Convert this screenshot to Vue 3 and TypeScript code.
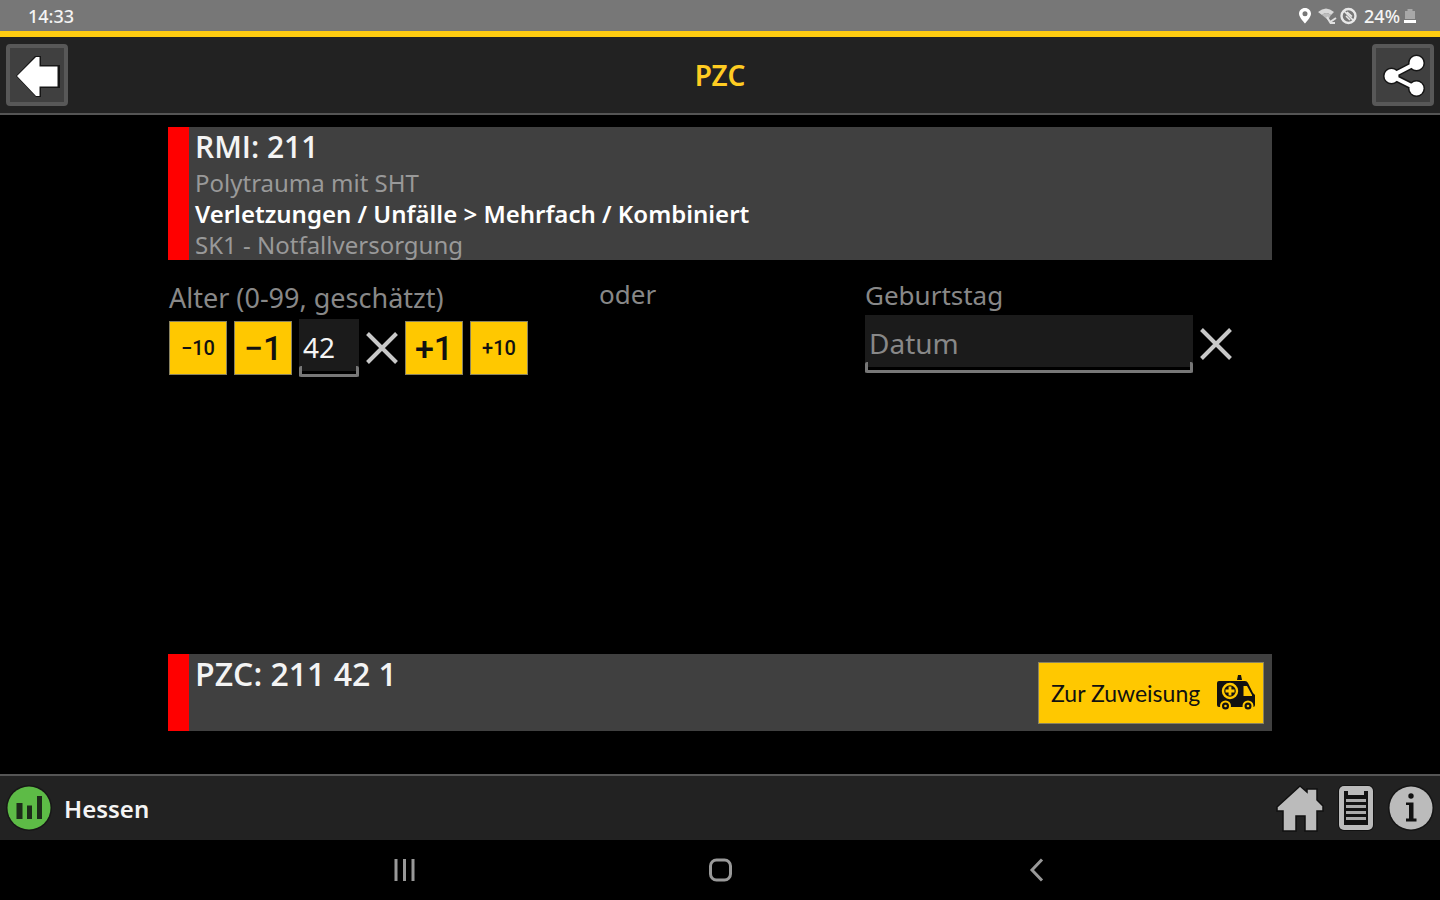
<script setup lang="ts">
import { computed, ref } from 'vue'

const age = ref<string>('42')
const birthday = ref<string>('')
const rmi = '211'
const priority = '1'

const code = computed(() => `${rmi} ${age.value} ${priority}`)

function step(delta: number): void {
  const next = (Number(age.value) || 0) + delta
  age.value = String(Math.min(99, Math.max(0, next)))
}
</script>

<template>
  <div class="app">
    <div class="status">
      <span>14:33</span>
      <div class="status-right">
        <svg class="pin" width="14" height="18" viewBox="0 0 14 18" aria-hidden="true">
          <path fill-rule="evenodd" d="M7 1C3.500 1 1 3.600 1 6.800 1 10.500 7 16.500 7 16.500S13 10.500 13 6.800C13 3.600 10.500 1 7 1ZM7 4.200A2.500 2.500 0 1 1 7 9.200 2.500 2.500 0 1 1 7 4.200Z" fill="#fff" />
        </svg>
        <svg class="wifi" width="22" height="18" viewBox="0 0 22 18" aria-hidden="true">
          <path d="M0 5Q8-2 16 5L13 8Q8 4 4 8Z" fill="#d8d8d8" />
          <path d="M4 8Q8 4 13 8L10 13Z" fill="#bdbdbd" />
          <path d="M9 10L12 15 18 11M12 16H17" fill="none" stroke="#e0e0e0" stroke-width="2" />
        </svg>
        <svg width="18" height="18" viewBox="0 0 18 18" aria-hidden="true">
          <circle cx="8.500" cy="9" r="7" fill="none" stroke="#e8e8e8" stroke-width="2.400" />
          <path d="M4 4L14 14M7 5L12 9.500M6 9L10 13" stroke="#e8e8e8" stroke-width="1.600" />
        </svg>
        <span class="percent">24%</span>
        <svg width="12" height="16" viewBox="0 0 12 16" aria-hidden="true">
          <path d="M1 3H3.500V1H8.500V3H11V11H1Z" fill="#a8a8a8" />
          <path d="M0 12H12V15H0Z" fill="#fff" />
        </svg>
      </div>
    </div>

    <header class="header">
      <button class="tool" type="button" aria-label="Zurück">
        <svg width="50" height="50" viewBox="0 0 50 50" aria-hidden="true">
          <path d="M4 26L23 6H29V15H48V38H29V47H24Z" fill="#161616" />
          <path d="M5 26L24 7H27.500V16.500H45.500V36.500H27.500V46H24Z" fill="#fff" />
        </svg>
      </button>
      <h1>PZC</h1>
      <button class="tool" type="button" aria-label="Teilen">
        <svg width="50" height="50" viewBox="0 0 50 50" aria-hidden="true">
          <g fill="#161616" stroke="#161616">
            <path d="M38.500 13L13.500 26L38.500 38.500" fill="none" stroke-width="7" />
            <circle cx="38.500" cy="13" r="8" /><circle cx="13.500" cy="26" r="8" /><circle cx="38.500" cy="38.500" r="8" />
          </g>
          <path d="M38.500 13L13.500 26L38.500 38.500" fill="none" stroke="#fff" stroke-width="4" />
          <g fill="#fff"><circle cx="38.500" cy="13" r="7" /><circle cx="13.500" cy="26" r="7" /><circle cx="38.500" cy="38.500" r="7" /></g>
        </svg>
      </button>
    </header>

    <main class="main">
      <section class="card">
        <h2>RMI: {{ rmi }}</h2>
        <p>Polytrauma mit SHT</p>
        <p class="strong">Verletzungen / Unfälle &gt; Mehrfach / Kombiniert</p>
        <p>SK1 - Notfallversorgung</p>
      </section>

      <div class="form">
        <div class="age">
          <label class="label age-label" for="age">Alter (0-99, geschätzt)</label>
          <div class="row">
            <button class="step small" type="button" @click="step(-10)">−10</button>
            <button class="step" type="button" @click="step(-1)">−1</button>
            <div class="field short"><input id="age" v-model="age" type="text" inputmode="numeric" /></div>
            <button class="clear" type="button" aria-label="Alter löschen" @click="age = ''">
              <svg width="32" height="32" viewBox="0 0 32 32" aria-hidden="true"><path d="M1.500 1.500L30.500 30.500M30.500 1.500L1.500 30.500" stroke="#c8c8c8" stroke-width="4" /></svg>
            </button>
            <button class="step" type="button" @click="step(1)">+1</button>
            <button class="step small" type="button" @click="step(10)">+10</button>
          </div>
        </div>
        <span class="or">oder</span>
        <div class="birth">
          <label class="label" for="birthday">Geburtstag</label>
          <div class="row">
            <div class="field long"><input id="birthday" v-model="birthday" type="text" placeholder="Datum" /></div>
            <button class="clear" type="button" aria-label="Geburtstag löschen" @click="birthday = ''">
              <svg width="32" height="32" viewBox="0 0 32 32" aria-hidden="true"><path d="M1.500 1.500L30.500 30.500M30.500 1.500L1.500 30.500" stroke="#c8c8c8" stroke-width="4" /></svg>
            </button>
          </div>
        </div>
      </div>

      <section class="card result">
        <h2>PZC: {{ code }}</h2>
        <button class="assign" type="button">
          <span>Zur Zuweisung</span>
          <svg width="40" height="38" viewBox="0 0 40 38" aria-hidden="true">
            <path d="M21 6L22 1H25L26 6Z" fill="#111" />
            <path d="M3 7H29Q31 7 32 9L37 19 39 21V31Q39 33 37 33H3Q1 33 1 31V9Q1 7 3 7Z" fill="#111" />
            <path d="M27.500 12H31L36 21V22H27.500Z" fill="#ffc800" />
            <circle cx="14" cy="17" r="7" fill="#111" stroke="#ffc800" stroke-width="2.400" />
            <path d="M14 12.500V21.500M9.500 17H18.500" stroke="#ffc800" stroke-width="2.800" />
            <g fill="#111" stroke="#ffc800" stroke-width="2"><circle cx="9.500" cy="32" r="4.500" /><circle cx="32" cy="32" r="4.500" /></g>
            <g fill="#ffc800"><circle cx="9.500" cy="32" r="1.300" /><circle cx="32" cy="32" r="1.300" /></g>
          </svg>
        </button>
      </section>
    </main>

    <footer class="footer">
      <div class="region">
        <svg width="46" height="46" viewBox="0 0 46 46" aria-hidden="true">
          <circle cx="23" cy="23" r="23" fill="#171717" />
          <circle cx="23" cy="23" r="21.500" fill="#5dbb46" />
          <path d="M10.500 18H16.500V34H10.500ZM21 20.500H26V34H21ZM31 11H36V34H31Z" fill="#1d2b1a" />
        </svg>
        <span>Hessen</span>
      </div>
      <nav class="links">
        <a href="#home" aria-label="Start">
          <svg width="48" height="48" viewBox="0 0 48 48" aria-hidden="true">
            <path d="M24 2L31 8V5H41V16L47 22V27H41V47H29V32H20V47H7V27H1V23Z" fill="#bbb" stroke="#111" stroke-width="1.500" />
          </svg>
        </a>
        <a href="#protocol" aria-label="Protokoll">
          <svg width="38" height="48" viewBox="0 0 38 48" aria-hidden="true">
            <rect x="1" y="1" width="36" height="46" rx="6" fill="#111" />
            <rect x="2" y="2" width="34" height="44" rx="5" fill="#bbb" />
            <path d="M7 7H11V11H27V7H31V41H7Z" fill="#111" />
            <path d="M9 16.500H29M9 22.500H29M9 28.500H29M9 34.500H29" stroke="#aaa" stroke-width="3" />
          </svg>
        </a>
        <a href="#info" aria-label="Info">
          <svg width="46" height="46" viewBox="0 0 46 46" aria-hidden="true">
            <circle cx="23" cy="23" r="23" fill="#151515" />
            <circle cx="23" cy="23" r="21.500" fill="#bbb" />
            <circle cx="23" cy="11" r="2.700" fill="#111" />
            <path d="M18 17.500H25.500V33.500H28.500V36.500H18V33.500H21V20H18Z" fill="#111" />
          </svg>
        </a>
      </nav>
    </footer>

    <nav class="system">
      <button type="button" aria-label="Letzte Apps">
        <svg width="24" height="26" viewBox="0 0 24 26" aria-hidden="true"><path d="M4 2V24M12.500 2V24M21 2V24" stroke="#999" stroke-width="3" /></svg>
      </button>
      <button type="button" aria-label="Startbildschirm">
        <svg width="26" height="26" viewBox="0 0 26 26" aria-hidden="true"><rect x="3.500" y="3" width="20" height="20" rx="6" fill="none" stroke="#999" stroke-width="3" /></svg>
      </button>
      <button type="button" aria-label="Zurück">
        <svg width="24" height="26" viewBox="0 0 24 26" aria-hidden="true"><path d="M18 2.500L8 13L18 23.500" fill="none" stroke="#999" stroke-width="3" /></svg>
      </button>
    </nav>
  </div>
</template>

<style>
body {
  margin: 0;
  background: #000;
}
</style>

<style scoped>
* {
  box-sizing: border-box;
}
.app {
  min-height: 100vh;
  display: flex;
  flex-direction: column;
  background: #000;
  color: #f4f4f4;
  font-family: "Noto Sans", sans-serif;
}
button {
  padding: 0;
  border: 0;
  background: none;
  color: inherit;
  font-family: inherit;
  cursor: pointer;
}
svg {
  display: block;
  flex-shrink: 0;
}
h1, h2, p {
  margin: 0;
}
.status {
  height: 37px;
  display: flex;
  align-items: center;
  justify-content: space-between;
  padding: 0 24px 0 28px;
  background: #777;
  border-bottom: 6px solid #fc1;
  font-size: 18px;
  font-weight: 500;
}
.status-right {
  display: flex;
  align-items: center;
}
.wifi {
  margin-left: 6px;
}
.percent {
  margin: 0 4px 0 6px;
}
.header {
  height: 78px;
  display: flex;
  align-items: center;
  justify-content: space-between;
  padding: 0 6px;
  background: #222;
  border-bottom: 2px solid #555;
}
.header h1 {
  color: #fc2;
  font-size: 28px;
  line-height: 40px;
  font-weight: 600;
}
.tool {
  width: 62px;
  height: 62px;
  display: grid;
  place-items: center;
  background: #404040;
  border: 4px solid #585858;
  border-radius: 4px;
}
.main {
  flex: 1;
  display: flex;
  flex-direction: column;
  padding: 12px 168px 43px;
}
.card {
  border-left: 21px solid #f00;
  background: #404040;
  padding: 0 8px 0 6px;
}
.card h2 {
  font-family: "Open Sans", "Noto Sans", sans-serif;
  font-size: 30px;
  line-height: 40px;
  font-weight: 600;
}
.card p {
  font-size: 24px;
  line-height: 31px;
  color: #999;
}
.card p.strong {
  color: #fff;
  font-weight: 600;
}
.form {
  display: flex;
  justify-content: space-between;
  padding: 16px 40px 0 1px;
}
.label {
  display: block;
  color: #888;
  font-size: 26px;
  line-height: 39px;
}
.age-label {
  font-size: 27px;
  line-height: 43px;
}
.age {
  width: 430px;
}
.or {
  flex: 1;
  color: #888;
  font-size: 26px;
  line-height: 36px;
}
.birth {
  width: 367px;
}
.row {
  display: flex;
  align-items: center;
  gap: 7px;
}
.step {
  width: 58px;
  height: 54px;
  background: #ffc800;
  border: 1px solid #8a8360;
  color: #111;
  font-family: Roboto, sans-serif;
  font-size: 34px;
  font-weight: 500;
}
.step.small {
  font-size: 20px;
}
.field {
  position: relative;
  height: 58px;
}
.field input {
  width: 100%;
  height: 52px;
  padding: 4px 4px 0;
  border: 0;
  outline: 0;
  background: #1b1b1b;
  color: #f4f4f4;
  font-family: inherit;
  font-size: 28px;
}
.field input::placeholder {
  color: #888;
  opacity: 1;
}
.field::after {
  content: "";
  position: absolute;
  left: 0;
  right: 0;
  bottom: 0;
  height: 8px;
  border: 3px solid #777;
  border-top: 0;
  border-radius: 2px;
  pointer-events: none;
}
.short {
  width: 60px;
}
.long {
  flex: 1;
}
.result {
  min-height: 77px;
  display: flex;
  justify-content: space-between;
  align-items: flex-start;
  margin-top: auto;
}
.result h2 {
  font-size: 32px;
}
.assign {
  width: 226px;
  height: 62px;
  margin-top: 8px;
  padding: 0 7px 0 12px;
  display: flex;
  align-items: center;
  justify-content: space-between;
  background: #ffc800;
  border: 1px solid #8a8360;
  color: #111;
  font-family: Lato, "Noto Sans", sans-serif;
  font-size: 23px;
  white-space: nowrap;
}
.footer {
  height: 66px;
  display: flex;
  align-items: center;
  justify-content: space-between;
  padding: 0 6px;
  background: #222;
  border-top: 2px solid #555;
}
.region {
  display: flex;
  align-items: center;
  gap: 12px;
  font-size: 24px;
  font-weight: 600;
}
.links {
  display: flex;
  align-items: center;
  gap: 13px;
}
.system {
  height: 60px;
  display: flex;
  align-items: center;
  justify-content: space-around;
  padding: 0 246px;
}
</style>
